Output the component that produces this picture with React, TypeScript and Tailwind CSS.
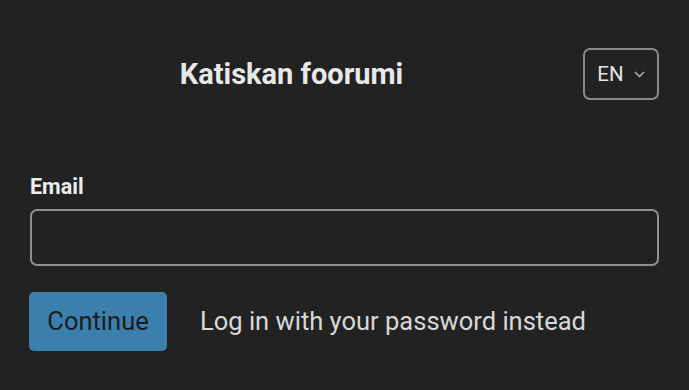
import React from 'react';

const App = () => {
  return (
    <div className="w-[689px] h-[390px] bg-[#222222] font-['Roboto',sans-serif] overflow-hidden">
      {/* Header */}
      <div className="flex items-center pt-[48px] pr-[30px]">
        <h1 className="flex-1 text-center text-[29px] font-bold text-[#e8e8e8] leading-none">Katiskan foorumi</h1>
        <button className="w-[76px] h-[52px] flex items-center justify-center gap-[10px] border-2 border-[#8a8a8a] rounded-[7px] text-[#e6e6e6] text-[20.5px]">
          EN
          <svg width="11" height="7" viewBox="0 0 11 7" fill="none" stroke="#bbbbbb" strokeWidth="1.4">
            <path d="M1 1l4.5 4.5L10 1" />
          </svg>
        </button>
      </div>

      {/* Form */}
      <div className="px-[30px] pt-[76px]">
        <label className="block text-[21.5px] font-bold text-[#ededed] leading-none mb-[11px]">Email</label>
        <input
          type="email"
          className="w-full h-[57px] bg-transparent border-2 border-[#8f8f8f] rounded-[7px] px-3 text-white text-[20px] outline-none"
        />
        <div className="flex items-center gap-[33px] mt-[26px] -ml-px">
          <button className="h-[59px] w-[138px] bg-[#3b7fad] rounded-[5px] text-[#1b1b1b] text-[25.5px]">
            Continue
          </button>
          <a className="text-[25.5px] text-[#d8d8d8]">Log in with your password instead</a>
        </div>
      </div>
    </div>
  );
};

export default App;
